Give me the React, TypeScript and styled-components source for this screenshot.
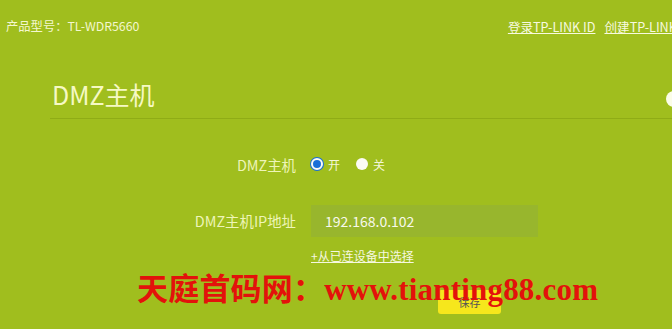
import React from "react";
import styled, { createGlobalStyle } from "styled-components";

const GlobalStyle = createGlobalStyle`
  html, body {
    margin: 0;
    padding: 0;
    background: #a0be1e;
  }
  body {
    font-family: "Noto Sans CJK SC", "Open Sans", sans-serif;
  }
`;

const Page = styled.div`
  position: relative;
  width: 672px;
  height: 329px;
  overflow: hidden;
  background: #a0be1e;
  color: #f3f6d2;
`;

const TopBar = styled.div`
  display: flex;
  justify-content: space-between;
  align-items: center;
  height: 52px;
  padding: 0 0 0 6px;
  font-size: 12px;
  white-space: nowrap;
`;

const Model = styled.div`
  color: #f4f7cf;
  font-size: 12.3px;
`;

const Links = styled.div`
  display: flex;
  gap: 9px;
  margin-right: -20px;
  font-size: 12.6px;
`;

const TopLink = styled.a`
  color: #f8fae0;
  text-decoration: underline;
  cursor: pointer;
`;

const Section = styled.div`
  margin-left: 50px;
  padding-top: 22px;
`;

const TitleRow = styled.div`
  position: relative;
  display: flex;
  align-items: center;
  height: 44px;
  padding-left: 2px;
  border-bottom: 1px solid #8fac16;
`;

const Title = styled.h2`
  margin: 0;
  font-size: 25px;
  font-weight: 400;
  color: #f6f9c4;
  margin-top: -4px;
`;

const HelpDot = styled.span`
  position: absolute;
  right: -10px;
  top: 17px;
  width: 16px;
  height: 16px;
  border-radius: 50%;
  background: #fbfde8;
`;

const Form = styled.div`
  display: flex;
  flex-direction: column;
  padding-top: 27px;
`;

const Row = styled.div<{ $height: number }>`
  display: flex;
  align-items: center;
  height: ${(p) => p.$height}px;
`;

const Label = styled.div`
  width: 246px;
  text-align: right;
  font-size: 14.4px;
  color: #eef5b8;
  padding-right: 15px;
  box-sizing: content-box;
`;

const RadioGroup = styled.div`
  display: flex;
  align-items: center;
  font-size: 12px;
`;

const Radio = styled.span<{ $on?: boolean }>`
  display: inline-block;
  width: 12px;
  height: 12px;
  box-sizing: border-box;
  border-radius: 50%;
  background: ${(p) => (p.$on ? "#1a6fd8" : "#fbfbf5")};
  border: ${(p) => (p.$on ? "2px solid #fbfbf5" : "none")};
  box-shadow: ${(p) => (p.$on ? "0 0 0 1px #1a6fd8" : "none")};
  margin-right: 5px;
`;

const RadioText = styled.span`
  margin-right: 16px;
  color: #f4f7d8;
`;

const Input = styled.div`
  width: 227px;
  height: 32px;
  box-sizing: border-box;
  padding-left: 14px;
  display: flex;
  align-items: center;
  background: #98b62d;
  font-size: 14px;
  color: #f8f9ec;
`;

const PickLink = styled.a`
  margin-left: 261px;
  margin-top: -8px;
  font-size: 12px;
  color: #f6f8e0;
  text-decoration: underline;
`;

const SaveRow = styled.div`
  display: flex;
  padding-left: 388px;
  padding-top: 31px;
`;

const SaveButton = styled.button`
  width: 63px;
  height: 24px;
  border: none;
  border-radius: 3px;
  background: #f6e71c;
  color: #555;
  font-family: inherit;
  font-size: 11px;
  padding: 0;
  display: flex;
  align-items: center;
  justify-content: center;
`;

const Watermark = styled.div`
  position: absolute;
  left: 137px;
  top: 264px;
  font-family: "Liberation Serif", "Noto Sans CJK SC", serif;
  font-weight: 700;
  font-size: 31px;
  color: #e3120b;
  white-space: nowrap;
  letter-spacing: 0.2px;
`;

export default function App() {
  return (
    <Page>
      <GlobalStyle />
      <TopBar>
        <Model>产品型号：TL-WDR5660</Model>
        <Links>
          <TopLink>登录TP-LINK ID</TopLink>
          <TopLink>创建TP-LINK ID</TopLink>
        </Links>
      </TopBar>
      <Section>
        <TitleRow>
          <Title>DMZ主机</Title>
          <HelpDot />
        </TitleRow>
        <Form>
          <Row $height={36}>
            <Label>DMZ主机</Label>
            <RadioGroup>
              <Radio $on />
              <RadioText>开</RadioText>
              <Radio />
              <RadioText>关</RadioText>
            </RadioGroup>
          </Row>
          <Row $height={77}>
            <Label>DMZ主机IP地址</Label>
            <Input>192.168.0.102</Input>
          </Row>
          <Row $height={0}>
            <PickLink>+从已连设备中选择</PickLink>
          </Row>
          <SaveRow>
            <SaveButton>保存</SaveButton>
          </SaveRow>
        </Form>
      </Section>
      <Watermark>天庭首码网：www.tianting88.com</Watermark>
    </Page>
  );
}
